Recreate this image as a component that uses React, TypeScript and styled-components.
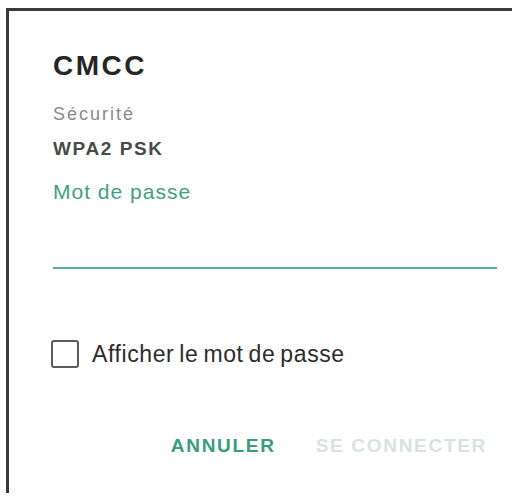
import React from "react";
import styled, { createGlobalStyle } from "styled-components";

const Global = createGlobalStyle`
  html, body { margin: 0; padding: 0; background: #ffffff; }
  body { font-family: "Liberation Sans", Arial, sans-serif; }
`;

const Frame = styled.div`
  margin: 8px 0 0 6px;
  height: 485px;
  border-top: 3px solid #3a3a3a;
  border-left: 3px solid #3a3a3a;
  padding: 39px 15px 0 44px;
  box-sizing: border-box;
  display: flex;
  flex-direction: column;
  overflow: hidden;
`;

const Title = styled.div`
  font-size: 28px;
  line-height: 32px;
  font-weight: 700;
  letter-spacing: 2.5px;
  color: #262626;
`;

const Label = styled.div`
  margin-top: 22px;
  font-size: 18px;
  line-height: 21px;
  letter-spacing: 2px;
  color: #8a8a8a;
`;

const Value = styled.div`
  margin-top: 13px;
  font-size: 19px;
  line-height: 22px;
  font-weight: 700;
  letter-spacing: 1.6px;
  color: #4a4a4a;
`;

const FieldLabel = styled.div`
  margin-top: 20px;
  font-size: 21px;
  line-height: 24px;
  letter-spacing: 1px;
  color: #3f9f82;
`;

const Field = styled.div`
  height: 63px;
  border-bottom: 2px solid #55b295;
`;

const CheckRow = styled.label`
  margin-top: 70px;
  margin-left: -2px;
  display: flex;
  align-items: center;
  gap: 13px;
  height: 30px;
`;

const Box = styled.span`
  width: 28px;
  height: 28px;
  box-sizing: border-box;
  border: 2px solid #5c5c5c;
  border-radius: 3px;
`;

const CheckText = styled.span`
  font-size: 23px;
  line-height: 26px;
  letter-spacing: 0.6px;
  word-spacing: -2px;
  color: #2c2c2c;
`;

const Actions = styled.div`
  margin-top: 66px;
  margin-right: 10px;
  display: flex;
  justify-content: flex-end;
  gap: 40px;
`;

const Action = styled.span<{ $disabled?: boolean }>`
  font-size: 19px;
  line-height: 22px;
  font-weight: 700;
  letter-spacing: 1.7px;
  color: ${(p) => (p.$disabled ? "#d6e3df" : "#3a9c7e")};
`;

export default function App() {
  return (
    <>
      <Global />
      <Frame>
        <Title>CMCC</Title>
        <Label>Sécurité</Label>
        <Value>WPA2 PSK</Value>
        <FieldLabel>Mot de passe</FieldLabel>
        <Field />
        <CheckRow>
          <Box />
          <CheckText>Afficher le mot de passe</CheckText>
        </CheckRow>
        <Actions>
          <Action>ANNULER</Action>
          <Action $disabled>SE CONNECTER</Action>
        </Actions>
      </Frame>
    </>
  );
}
